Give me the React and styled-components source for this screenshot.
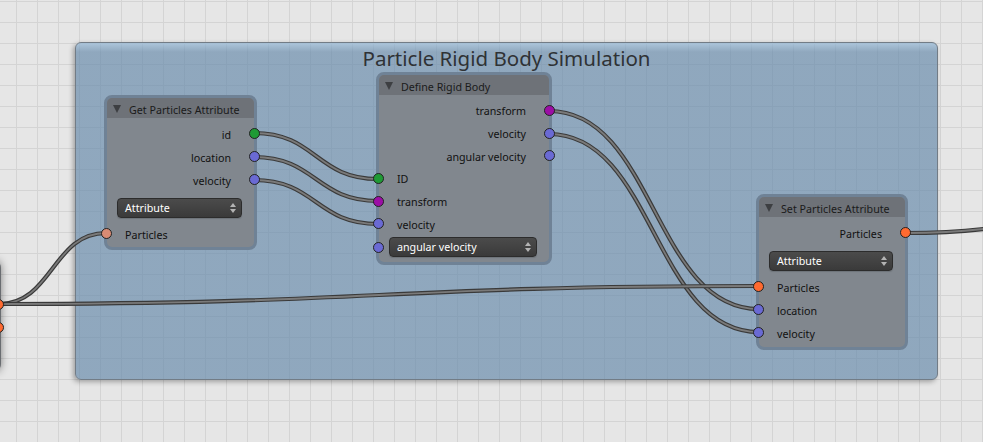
import styled, { createGlobalStyle } from 'styled-components';

const GlobalStyle = createGlobalStyle`
    body {
        margin: 0;
        background: #e6e6e6;
        font-family: "Noto Sans", "Open Sans", sans-serif;
    }
`;

const socketColors = {
    int: '#1f9a35',
    matrix: '#9c0ea6',
    vector: '#6a6ad4',
    particles: '#ff6a30',
    faded: '#d98b74',
};

const Canvas = styled.div`
    position: relative;
    width: 983px;
    height: 442px;
    overflow: hidden;
    background-color: #e6e6e6;
    background-image:
        linear-gradient(to right, #d4d4d4 1px, transparent 1px),
        linear-gradient(to bottom, #d4d4d4 1px, transparent 1px);
    background-size: 21px 21px;
    background-position: 16px 1px;
`;

const Frame = styled.div`
    position: absolute;
    left: 75px;
    top: 42px;
    width: 863px;
    height: 338px;
    box-sizing: border-box;
    border: 1px solid #727c86;
    border-radius: 6px;
    background: linear-gradient(to bottom, rgba(150, 185, 215, 0.72) 0, rgba(101, 137, 170, 0.67) 9px);
    box-shadow: -2px 2px 5px rgba(0, 0, 0, 0.3);
`;

const FrameTitle = styled.div`
    margin-top: 1px;
    text-align: center;
    font-size: 20.5px;
    line-height: 28px;
    color: #2f3235;
`;

const Links = styled.svg`
    position: absolute;
    left: 0;
    top: 0;
    overflow: visible;
`;

const NodeBox = styled.div`
    position: absolute;
    left: ${p => p.$x}px;
    top: ${p => p.$y}px;
    width: ${p => p.$w}px;
    box-sizing: border-box;
    border: 3px solid ${p => p.$off ? '#6a6d71' : '#6f8296'};
    border-radius: 8px;
    background: #81878e;
    box-shadow: ${p => p.$off ? '0 0 8px rgba(0, 0, 0, 0.45)' : 'none'};
    display: flex;
    flex-direction: column;
`;

const Header = styled.div`
    height: 20px;
    box-sizing: border-box;
    padding: 3px 0 0 6px;
    display: flex;
    align-items: center;
    gap: 8px;
    background: #6e7278;
    border-radius: 5px 5px 0 0;
    font-size: 10.7px;
    color: #1b1b1b;
    white-space: nowrap;
`;

const Collapse = styled.span`
    width: 0;
    height: 0;
    border-left: 4.5px solid transparent;
    border-right: 4.5px solid transparent;
    border-top: 8px solid #3d3f42;
    margin-top: -2px;
`;

const Body = styled.div`
    padding: ${p => p.$pt}px 0 ${p => p.$pb}px;
`;

const Row = styled.div`
    position: relative;
    height: ${p => p.$h}px;
    box-sizing: border-box;
    display: flex;
    align-items: center;
    justify-content: ${p => p.$out ? 'flex-end' : 'flex-start'};
    padding: ${p => p.$widget ? `${p.$drop}px 12px 0 10px` : '2px 23px 0 18px'};
    font-size: 10.7px;
    color: #111;
    white-space: nowrap;
`;

const Socket = styled.span`
    position: absolute;
    top: 50%;
    width: 11px;
    height: 11px;
    margin-top: -5.5px;
    box-sizing: border-box;
    border-radius: 50%;
    border: 1px solid #222;
    background: ${p => p.$color};
    ${p => p.$out ? 'right: -5.5px;' : 'left: -6px;'}
`;

const Dropdown = styled.div`
    flex: 1;
    height: 20px;
    box-sizing: border-box;
    display: flex;
    align-items: center;
    justify-content: space-between;
    padding: 0 5px 0 7px;
    border: 1px solid #2c2c2c;
    border-radius: 4px;
    background: linear-gradient(to bottom, #4b4b4b, #3a3a3a);
    box-shadow: 0 1px 1px rgba(0, 0, 0, 0.15);
    color: #fff;
    font-size: 10.7px;
`;

const Arrows = styled.span`
    display: flex;
    flex-direction: column;
    gap: 2px;
`;

const Arrow = styled.span`
    width: 0;
    height: 0;
    border-left: 3px solid transparent;
    border-right: 3px solid transparent;
    ${p => p.$down ? 'border-top: 4px solid #b4b4b4;' : 'border-bottom: 4px solid #b4b4b4;'}
`;

const Select = ({ label }) => (
    <Dropdown>
        <span>{label}</span>
        <Arrows>
            <Arrow />
            <Arrow $down />
        </Arrows>
    </Dropdown>
);

const nodes = [
    {
        title: 'Get Particles Attribute', x: 104, y: 95, w: 153, pt: 4, pb: 2,
        rows: [
            { out: true, label: 'id', socket: 'int' },
            { out: true, label: 'location', socket: 'vector' },
            { out: true, label: 'velocity', socket: 'vector' },
            { widget: 'Attribute', h: 31 },
            { label: 'Particles', socket: 'faded' },
        ],
    },
    {
        title: 'Define Rigid Body', x: 376, y: 72, w: 176, pt: 4, pb: 3, rowH: 22.7,
        rows: [
            { out: true, label: 'transform', socket: 'matrix' },
            { out: true, label: 'velocity', socket: 'vector' },
            { out: true, label: 'angular velocity', socket: 'vector' },
            { label: 'ID', socket: 'int' },
            { label: 'transform', socket: 'matrix' },
            { label: 'velocity', socket: 'vector' },
            { widget: 'angular velocity', socket: 'vector', h: 24, drop: 0 },
        ],
    },
    {
        title: 'Set Particles Attribute', x: 756, y: 194, w: 152, pt: 4, pb: 3,
        rows: [
            { out: true, label: 'Particles', socket: 'particles' },
            { widget: 'Attribute', h: 31 },
            { label: 'Particles', socket: 'particles' },
            { label: 'location', socket: 'vector' },
            { label: 'velocity', socket: 'vector' },
        ],
    },
];

const links = [
    [254, 133, 378, 179],
    [254, 157, 378, 201],
    [254, 180, 378, 224],
    [549, 111, 759, 309],
    [549, 134, 759, 332],
    [-1, 304, 106, 233],
    [-1, 304, 759, 286],
    [905, 233, 1200, 200],
];

const linkPath = ([x1, y1, x2, y2]) => {
    const d = Math.abs(x2 - x1) * 0.5;
    return `M${x1} ${y1} C${x1 + d} ${y1}, ${x2 - d} ${y2}, ${x2} ${y2}`;
};

const Node = ({ node }) => (
    <NodeBox $x={node.x} $y={node.y} $w={node.w}>
        <Header>
            <Collapse />
            <span>{node.title}</span>
        </Header>
        <Body $pt={node.pt} $pb={node.pb}>
            {node.rows.map((row, i) => (
                <Row
                    key={i}
                    $h={row.h || node.rowH || 23}
                    $out={row.out}
                    $widget={!!row.widget}
                    $drop={row.drop ?? 2}
                >
                    {row.widget ? <Select label={row.widget} /> : row.label}
                    {row.socket && <Socket $out={row.out} $color={socketColors[row.socket]} />}
                </Row>
            ))}
        </Body>
    </NodeBox>
);

const App = () => {
    return (
        <Canvas>
            <GlobalStyle />
            <Frame>
                <FrameTitle>Particle Rigid Body Simulation</FrameTitle>
            </Frame>
            <Links width="983" height="442">
                {links.map((l, i) => (
                    <g key={i} fill="none" strokeLinecap="round">
                        <path d={linkPath(l)} stroke="#3a3a3a" strokeWidth="4.2" />
                        <path d={linkPath(l)} stroke="#7a7a7a" strokeWidth="1.8" />
                    </g>
                ))}
            </Links>
            <NodeBox $x={-149} $y={260} $w={150} $off>
                <Header />
                <Body $pt={9.5} $pb={30}>
                    <Row $h={23} $out><Socket $out $color={socketColors.particles} /></Row>
                    <Row $h={23} $out><Socket $out $color={socketColors.particles} /></Row>
                </Body>
            </NodeBox>
            {nodes.map((node, i) => <Node key={i} node={node} />)}
        </Canvas>
    );
};

export default App;
